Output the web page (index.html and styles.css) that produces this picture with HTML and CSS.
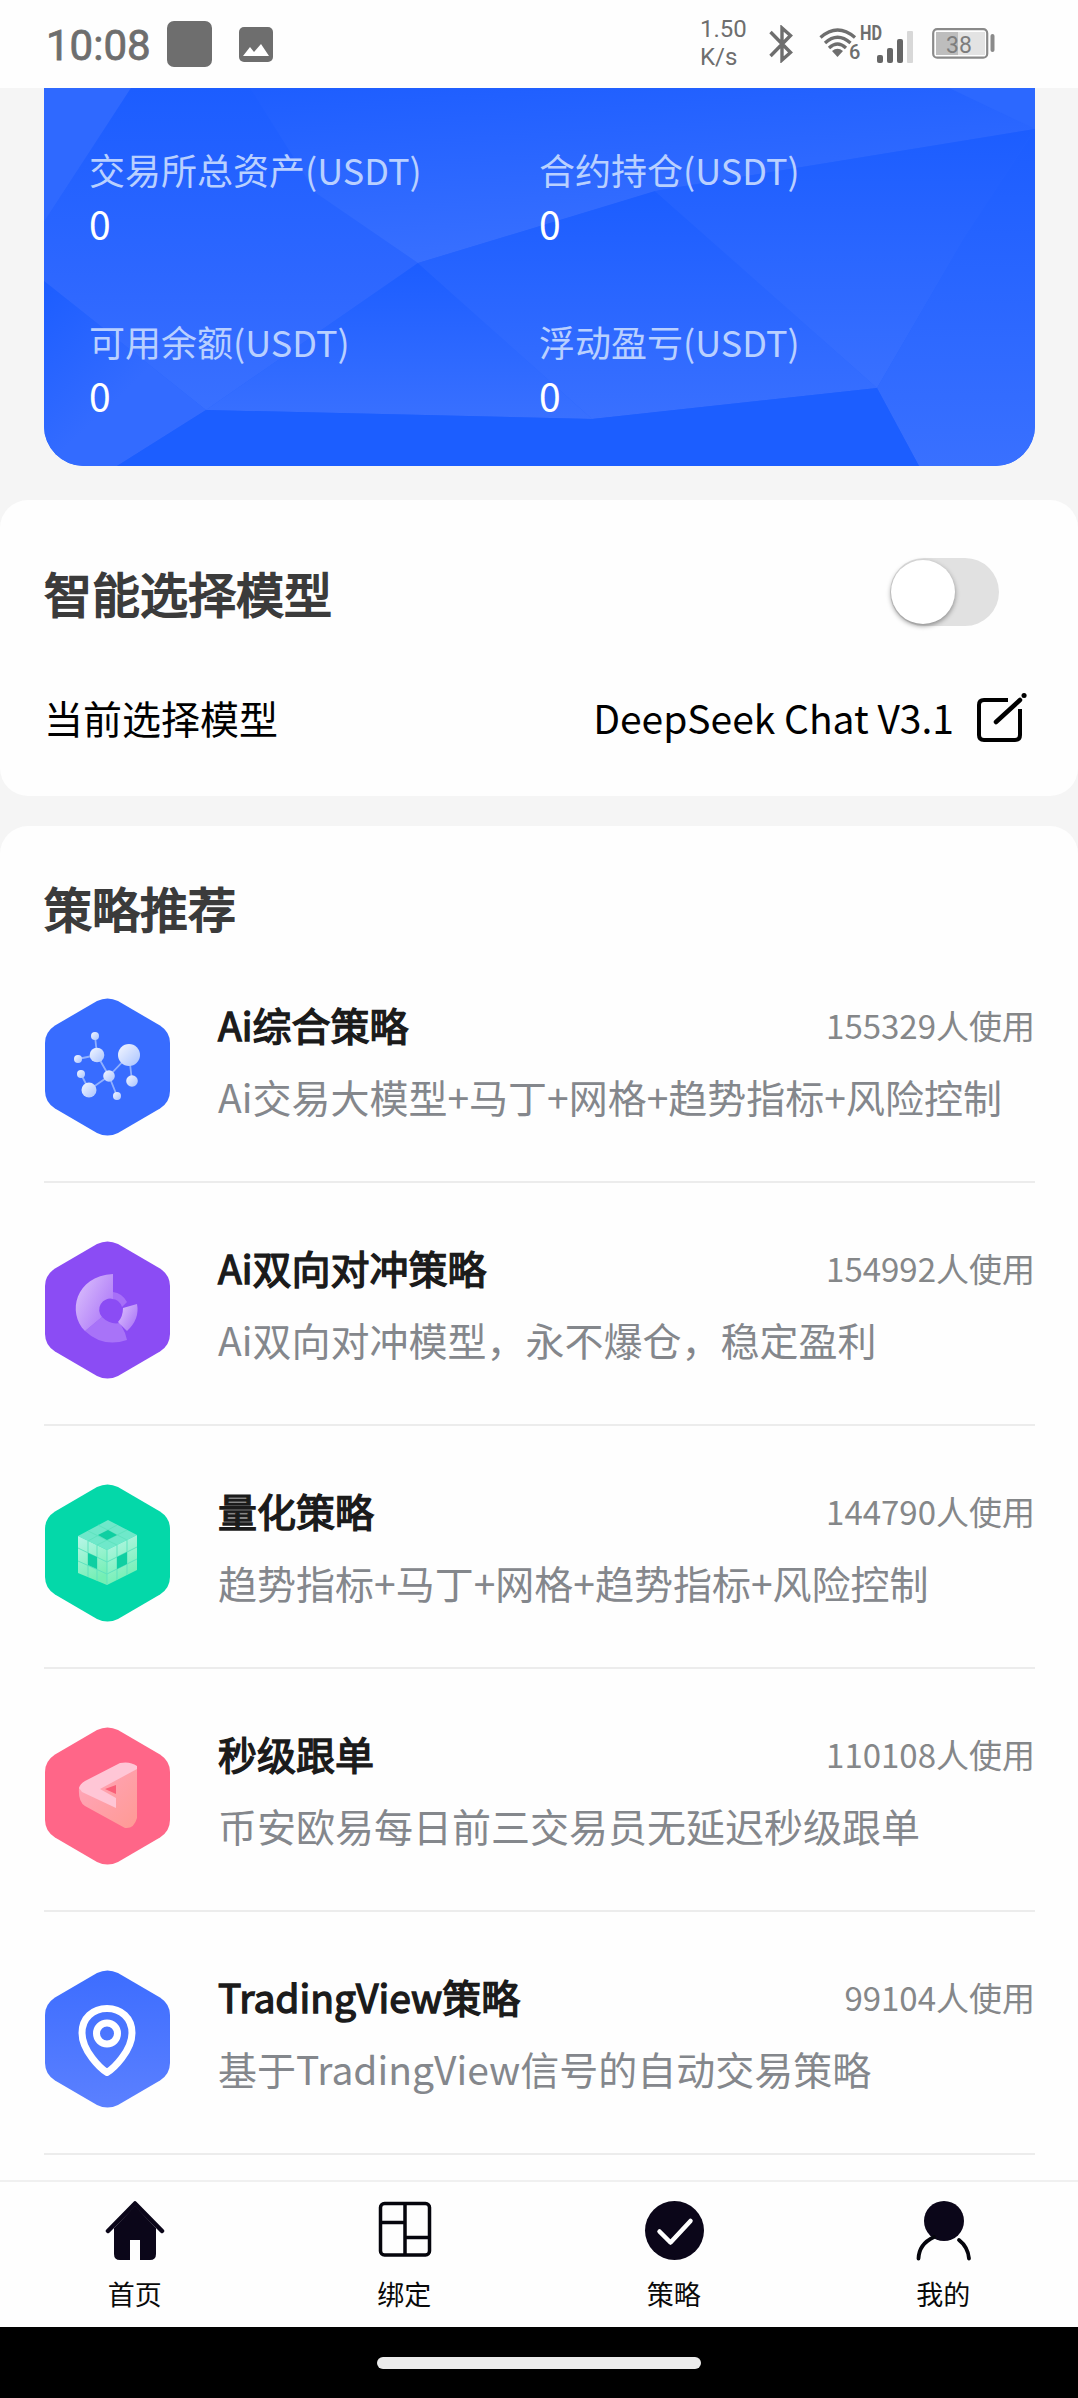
FILE: index.html
```html
<!DOCTYPE html>
<html lang="zh-CN">
<head>
    <meta charset="UTF-8">
    <meta name="viewport" content="width=device-width, initial-scale=1.0">
    <title>策略</title>
    <link rel="stylesheet" href="styles.css">
</head>
<body>
    <!-- formas compartidas -->
    <svg class="defs" width="0" height="0">
        <defs>
            <path id="hex" d="M52 3Q62.500-2 73 3L115 27.500Q125 34 125 45V93Q125 104 115 110.500L73 135Q62.500 140 52 135L10 110.500Q0 104 0 93V45Q0 34 10 27.500Z"/>
            <linearGradient id="ball" x1="0" y1="0" x2="1" y2="1"><stop offset="0" stop-color="#f4f7ff"/><stop offset="1" stop-color="#a9c3ff"/></linearGradient>
            <linearGradient id="down" x1="0" y1="0" x2="0" y2="1"><stop offset="0" stop-color="#1c5dff"/><stop offset="1" stop-color="#3970ff"/></linearGradient>
            <linearGradient id="left" x1="0" y1="0" x2="0" y2="1"><stop offset="0" stop-color="#1c5dff"/><stop offset="0.65" stop-color="#2f68ff"/><stop offset="1" stop-color="#3970ff"/></linearGradient>
            <linearGradient id="corner" x1="0" y1="0" x2="0.5" y2="0.6"><stop offset="0" stop-color="#1c5dff"/><stop offset="1" stop-color="#336bff"/></linearGradient>
            <linearGradient id="side" x1="0.05" y1="0" x2="0.35" y2="1"><stop offset="0" stop-color="#1e5eff"/><stop offset="1" stop-color="#3970ff"/></linearGradient>
            <linearGradient id="donut" x1="0" y1="0.2" x2="1" y2="1"><stop offset="0" stop-color="#d9bdfc"/><stop offset="1" stop-color="#a56cf7"/></linearGradient>
            <linearGradient id="cube" x1="0" y1="0" x2="0.3" y2="1"><stop offset="0" stop-color="#b9f6e9"/><stop offset="1" stop-color="#74efb4"/></linearGradient>
            <linearGradient id="arrow" x1="0" y1="0" x2="1" y2="1"><stop offset="0" stop-color="#ffa6bd"/><stop offset="1" stop-color="#ff9a94"/></linearGradient>
            <linearGradient id="pin" x1="0" y1="0" x2="0" y2="1"><stop offset="0" stop-color="#3d6dff"/><stop offset="1" stop-color="#5b80ff"/></linearGradient>
        </defs>
    </svg>

    <div class="phone">
        <header class="status">
            <span class="status-time">10:08</span>
            <span class="status-app"></span>
            <svg class="status-img" width="34" height="35" viewBox="0 0 34 35"><rect width="34" height="35" rx="5" fill="#6e6e6e"/><path d="M4 29L11 20L15 25L22 17L30 29Z" fill="#fff"/></svg>
            <div class="status-speed">1.50<br>K/s</div>
            <svg class="status-bt" width="24" height="38" viewBox="0 0 24 38" fill="none" stroke="#6e6e6e" stroke-width="3.400"><path d="M1.500 7L21.500 27.500L13 35V3L21.500 10.500L1.500 31"/></svg>
            <svg class="status-net" width="96" height="48" viewBox="0 -6 96 48">
                <g fill="none" stroke="#6e6e6e" stroke-width="3.300"><path d="M1.500 13.500Q18.500-1.500 36 13.500"/><path d="M6 19Q18.500 7.500 31.500 19"/><path d="M10 24Q18.500 16 27 24"/></g>
                <path d="M13 27Q18.500 22.500 24 27L18.500 33Z" fill="#6e6e6e"/>
                <text class="net-six" x="30" y="35">6</text>
                <text class="net-hd" x="41" y="16" textLength="22" lengthAdjust="spacingAndGlyphs">HD</text>
                <g fill="#666"><rect x="58" y="31" width="6" height="8" rx="2"/><rect x="68" y="24" width="6" height="15" rx="2"/><rect x="78" y="15" width="6" height="24" rx="2"/></g>
                <rect x="88" y="7" width="6" height="32" rx="1" fill="#d8d8d8"/>
            </svg>
            <svg class="status-bat" width="64" height="32" viewBox="0 0 64 32">
                <rect x="1.200" y="1.200" width="54" height="28.500" rx="4" fill="#fff" stroke="#8a8a8a" stroke-width="2.200"/>
                <rect x="4" y="4" width="22" height="23" fill="#bdbdbd"/><rect x="26" y="4" width="27" height="23" fill="#e3e3e3"/>
                <rect x="58.500" y="6" width="4" height="18" rx="2" fill="#8a8a8a"/>
                <text class="bat-num" x="27" y="25" text-anchor="middle">38</text>
            </svg>
        </header>

        <main class="content">
            <section class="card">
                <svg class="card-bg" viewBox="44 88 991 378" preserveAspectRatio="none">
                    <rect x="44" y="88" width="991" height="378" fill="#2563ff"/>
                    <polygon points="44,88 131,88 44,222" fill="#2f69ff"/>
                    <polygon points="131,88 260,88 316,193 418,263 206,410 44,281 44,222" fill="url(#left)"/>
                    <polygon points="44,281 206,410 117,466 44,466" fill="url(#corner)"/>
                    <polygon points="250,88 1035,88 1035,129 660,190 418,263 316,193" fill="url(#side)"/>
                    <polygon points="949,88 1035,88 1035,129" fill="#2c68ff"/>
                    <polygon points="418,263 206,410 592,419" fill="url(#down)"/>
                    <polygon points="418,263 655,191 877,388 592,419" fill="url(#down)"/>
                    <polygon points="655,191 1035,129 963,240 877,388" fill="url(#down)"/>
                    <polygon points="1035,129 963,240 877,388 919,466 1035,466" fill="url(#down)"/>
                    <polygon points="206,410 592,419 877,388 919,466 117,466" fill="#1c5eff"/>
                </svg>
                <div class="card-item">
                    <div class="card-label">交易所总资产(USDT)</div>
                    <div class="card-value">0</div>
                </div>
                <div class="card-item">
                    <div class="card-label">合约持仓(USDT)</div>
                    <div class="card-value">0</div>
                </div>
                <div class="card-item">
                    <div class="card-label">可用余额(USDT)</div>
                    <div class="card-value">0</div>
                </div>
                <div class="card-item">
                    <div class="card-label">浮动盈亏(USDT)</div>
                    <div class="card-value">0</div>
                </div>
            </section>

            <section class="panel model">
                <div class="row row-switch">
                    <h2 class="title">智能选择模型</h2>
                    <span class="switch"><span class="switch-knob"></span></span>
                </div>
                <div class="row row-model">
                    <span>当前选择模型</span>
                    <span class="model-name">DeepSeek Chat V3.1
                        <svg width="52" height="54" viewBox="0 0 52 54" fill="none" stroke="#000" stroke-width="4" stroke-linecap="round">
                            <path d="M32 10H8Q3 10 3 15V45Q3 50 8 50H39Q44 50 44 45V19" stroke-linecap="butt"/>
                            <path d="M20 32L44 10" stroke-width="4.500"/><path d="M48 5.500H48.100" stroke-width="5"/>
                        </svg>
                    </span>
                </div>
            </section>

            <section class="panel strategies">
                <h2 class="title">策略推荐</h2>
                <div class="item">
                    <svg class="item-icon" width="125" height="138" viewBox="0 0 125 138">
                        <use href="#hex" fill="#386cff"/>
                        <path d="M50 38L52 57L33 61M52 57L64 78L84 57L87 83M64 78L44 92L36 76M64 78L72 98" fill="none" stroke="#8fb0ff" stroke-width="1.800"/>
                        <g fill="url(#ball)"><circle cx="50" cy="38" r="4"/><circle cx="52" cy="57" r="7.300"/><circle cx="33" cy="61" r="4"/><circle cx="84" cy="57" r="11"/><circle cx="64" cy="78" r="5.800"/><circle cx="87" cy="83" r="5.800"/><circle cx="44" cy="92" r="7.500"/><circle cx="36" cy="76" r="4"/><circle cx="72" cy="98" r="4"/></g>
                    </svg>
                    <div class="item-body">
                        <div class="item-head"><span class="item-name">Ai综合策略</span><span class="item-count">155329人使用</span></div>
                        <div class="item-desc">Ai交易大模型+马丁+网格+趋势指标+风险控制</div>
                    </div>
                </div>
                <div class="item">
                    <svg class="item-icon" width="125" height="138" viewBox="0 0 125 138">
                        <use href="#hex" fill="#8b4cf4"/>
                        <path d="M40 90L57 76Q65 84 75 82L80 92L82 99Q58 107 40 90Z" fill="#a873f8"/>
                        <path d="M68 51Q77 52 82 61L77 66Q74 58 67 58Z" fill="#a76ff8"/>
                        <path d="M68 33V58A11 11 0 0 0 57 76L40 90C22 72 30 35 68 33Z" fill="url(#donut)"/>
                        <path d="M78 67L92 63Q95 78 82 90L73 81Q78 76 78 67Z" fill="url(#donut)"/>
                    </svg>
                    <div class="item-body">
                        <div class="item-head"><span class="item-name">Ai双向对冲策略</span><span class="item-count">154992人使用</span></div>
                        <div class="item-desc">Ai双向对冲模型，永不爆仓，稳定盈利</div>
                    </div>
                </div>
                <div class="item">
                    <svg class="item-icon" width="125" height="138" viewBox="0 0 125 138">
                        <use href="#hex" fill="#04d8a9"/>
                        <path d="M33 52L63 36L92 51L62 66Z" fill="#6fe8ca"/>
                        <path d="M33 52L62 66V101L33 89Z" fill="url(#cube)"/>
                        <path d="M62 66L92 51V86L62 101Z" fill="url(#cube)"/>
                        <path d="M43 47L72 61V96M53 41L82 56V91M72 41L43 57V93M82 46L52 61V97M33 64L62 78L92 63M33 77L62 90L92 75M62 66V101" fill="none" stroke="#5fe3bf" stroke-width="1"/>
                        <path d="M53 51L63 46L72 51L62 56ZM43 69L52 73V85L43 81ZM72 73L82 68V80L72 85Z" fill="#0fcfa2"/>
                    </svg>
                    <div class="item-body">
                        <div class="item-head"><span class="item-name">量化策略</span><span class="item-count">144790人使用</span></div>
                        <div class="item-desc">趋势指标+马丁+网格+趋势指标+风险控制</div>
                    </div>
                </div>
                <div class="item">
                    <svg class="item-icon" width="125" height="138" viewBox="0 0 125 138">
                        <use href="#hex" fill="#ff6688"/>
                        <path d="M34 61L75 48L92 40V91Q89 102 80 101L40 79Q33 75 34 61Z" fill="url(#arrow)"/>
                        <path d="M60 62L71 58L71 67Z" fill="#f95f78"/>
                        <path d="M34 61Q35 57 40 54L75 36Q85 34 92 39V42L55 62L71 71V81L37 65Z" fill="#ffc6d6"/>
                    </svg>
                    <div class="item-body">
                        <div class="item-head"><span class="item-name">秒级跟单</span><span class="item-count">110108人使用</span></div>
                        <div class="item-desc">币安欧易每日前三交易员无延迟秒级跟单</div>
                    </div>
                </div>
                <div class="item">
                    <svg class="item-icon" width="125" height="138" viewBox="0 0 125 138">
                        <use href="#hex" fill="url(#pin)"/>
                        <g fill="none" stroke="#fff" stroke-width="7"><path d="M62 102.500C56 99 37 81 37 63C37 48 48 38.500 62 38.500S87 48 87 63C87 81 68 99 62 102.500Z" stroke-linejoin="round"/><circle cx="62" cy="63.500" r="10.500"/></g>
                    </svg>
                    <div class="item-body">
                        <div class="item-head"><span class="item-name">TradingView策略</span><span class="item-count">99104人使用</span></div>
                        <div class="item-desc">基于TradingView信号的自动交易策略</div>
                    </div>
                </div>
            </section>
        </main>

        <nav class="tabs">
            <a class="tab">
                <svg width="60" height="62" viewBox="0 0 60 62"><path d="M9 28L30 6L51 28V54Q51 60 45 60H35V40H25V60H15Q9 60 9 54Z" fill="#0b0619"/><path d="M3 31L30 3.500L57 31" fill="none" stroke="#0b0619" stroke-width="4.500" stroke-linecap="round" stroke-linejoin="round"/></svg>
                <span>首页</span>
            </a>
            <a class="tab">
                <svg width="60" height="62" viewBox="0 0 60 62" fill="none" stroke="#05050c" stroke-width="3.500"><rect x="6.500" y="3.500" width="49" height="51.500" rx="4"/><path d="M31 3V55M6 22.500H31M31 37.500H56"/></svg>
                <span>绑定</span>
            </a>
            <a class="tab">
                <svg width="60" height="62" viewBox="0 0 60 62"><circle cx="30.500" cy="30.500" r="29.500" fill="#0b0619"/><path d="M15.500 31.500L26.500 42.500L46.500 21" fill="none" stroke="#fff" stroke-width="4.500" stroke-linecap="round" stroke-linejoin="round"/></svg>
                <span>策略</span>
            </a>
            <a class="tab">
                <svg width="60" height="62" viewBox="0 0 60 62"><circle cx="31" cy="21" r="20" fill="#0b0619"/><path d="M21 37Q6 44 5.500 58.500M46 40Q55 47 56 58.500" fill="none" stroke="#05050c" stroke-width="3.800" stroke-linecap="round"/></svg>
                <span>我的</span>
            </a>
        </nav>
        <div class="gesture"><span class="gesture-bar"></span></div>
    </div>
</body>
</html>
```

FILE: styles.css
```css
* {
    box-sizing: border-box;
}
html, body {
    margin: 0;
    padding: 0;
}
body {
    font-family: "Noto Sans CJK SC", sans-serif;
    background: #f5f5f5;
}
svg {
    display: block;
    flex-shrink: 0;
}
.defs {
    position: absolute;
}
.phone {
    width: 1078px;
    height: 2398px;
    display: flex;
    flex-direction: column;
    overflow: hidden;
}
/* barra de estado */
.status {
    height: 88px;
    flex-shrink: 0;
    display: flex;
    align-items: flex-start;
    background: #fefefe;
    padding: 0 82px 0 45px;
    color: #6e6e6e;
    font-family: Roboto, sans-serif;
}
.status-time {
    font-size: 42px;
    line-height: 50px;
    font-weight: 400;
    -webkit-text-stroke: 0.8px #6e6e6e;
    margin-top: 21px;
    padding-left: 1px;
    width: 122px;
}
.status-app {
    width: 45px;
    height: 46px;
    margin-top: 21px;
    border-radius: 7px;
    background: #6e6e6e;
}
.status-img {
    margin: 27px 0 0 27px;
}
.status-speed {
    font-size: 24px;
    line-height: 28px;
    margin: 15px 0 0 auto;
    width: 69px;
}
.status-bt {
    margin-top: 25px;
    width: 24px;
}
.status-net {
    margin: 18px 0 0 26px;
}
.status-bat {
    margin: 28px 0 0 17px;
}
.net-six {
    font-size: 20px;
    font-weight: 500;
    fill: #6e6e6e;
}
.net-hd {
    font-size: 20px;
    font-weight: 700;
    fill: #6e6e6e;
}
.bat-num {
    font-size: 23px;
    fill: #7d7d7d;
}
.content {
    flex: 1;
    min-height: 0;
    overflow: hidden;
}
/* tarjeta de activos */
.card {
    position: relative;
    width: 991px;
    height: 378px;
    margin: 0 0 34px 44px;
    padding: 54px 0 0 45px;
    display: grid;
    grid-template-columns: 450px 1fr;
    grid-auto-rows: 108px;
    row-gap: 64px;
    border-radius: 0 0 40px 40px;
    overflow: hidden;
    color: #fff;
}
.card-bg {
    position: absolute;
    top: 0;
    left: 0;
    width: 100%;
    height: 100%;
}
.card-item {
    position: relative;
}
.card-label {
    font-size: 36px;
    line-height: 54px;
    color: #b9d0ff;
}
.card-value {
    font-size: 39px;
    line-height: 54px;
}
.panel {
    background: #fefefe;
    border-radius: 28px;
}
.title {
    margin: 0;
    font-size: 48px;
    font-weight: 400;
    color: #3b3b3b;
    -webkit-text-stroke: 1.8px #3b3b3b;
}
.model {
    height: 296px;
    margin-bottom: 30px;
    padding: 58px 50px 0 44px;
}
.row {
    display: flex;
    align-items: center;
    justify-content: space-between;
}
.row-switch {
    height: 68px;
    margin-bottom: 64px;
    padding-right: 29px;
}
.switch {
    width: 109px;
    height: 68px;
    border-radius: 34px;
    background: #e1e1e1;
    padding: 2px 1px;
}
.switch-knob {
    display: block;
    width: 64px;
    height: 64px;
    border-radius: 50%;
    background: #fff;
    box-shadow: 0 2px 5px rgba(0,0,0,0.4);
}
.row-model {
    height: 54px;
    font-size: 39px;
    line-height: 54px;
    color: #000;
}
.model-name {
    display: flex;
    gap: 22px;
}
/* lista de estrategias */
.strategies {
    height: 1400px;
    padding: 48px 43px 0 44px;
}
.strategies .title {
    line-height: 66px;
}
.item {
    height: 243px;
    padding: 58px 0 0 1px;
    display: flex;
    gap: 48px;
    border-bottom: 2px solid #ececec;
}
.item-body {
    flex: 1;
}
.item-head {
    display: flex;
    justify-content: space-between;
    line-height: 54px;
    margin-bottom: 17px;
}
.item-name {
    font-size: 39px;
    line-height: 52px;
    font-weight: 400;
    color: #1b1b1b;
    -webkit-text-stroke: 1.4px #1b1b1b;
}
.item-count {
    font-size: 33px;
    color: #858789;
}
.item-desc {
    font-size: 39px;
    line-height: 54px;
    color: #84878c;
    white-space: nowrap;
}
/* menu inferior */
.tabs {
    height: 147px;
    flex-shrink: 0;
    display: flex;
    background: #fefefe;
    border-top: 2px solid #f0f0f0;
}
.tab {
    flex: 1;
    display: flex;
    flex-direction: column;
    align-items: center;
    padding-top: 18px;
    font-size: 27px;
    line-height: 36px;
    color: #0a0a0a;
}
.tab span {
    margin-top: 14px;
}
.gesture {
    height: 71px;
    flex-shrink: 0;
    background: #000;
    padding-top: 30px;
}
.gesture-bar {
    display: block;
    width: 324px;
    height: 12px;
    margin: 0 auto;
    border-radius: 6px;
    background: #ececec;
}
```
